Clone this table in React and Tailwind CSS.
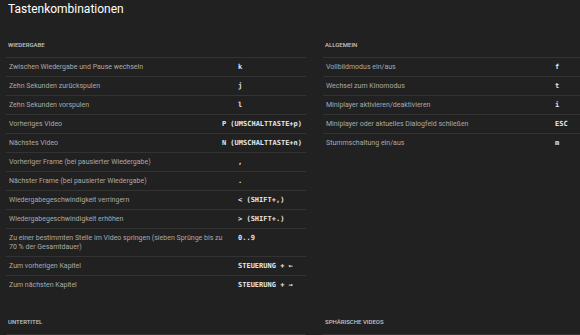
import React from "react";

const playback = [
  ["Zwischen Wiedergabe und Pause wechseln", "k"],
  ["Zehn Sekunden zurückspulen", "j"],
  ["Zehn Sekunden vorspulen", "l"],
  ["Vorheriges Video", "P (UMSCHALTTASTE+p)"],
  ["Nächstes Video", "N (UMSCHALTTASTE+n)"],
  ["Vorheriger Frame (bei pausierter Wiedergabe)", ","],
  ["Nächster Frame (bei pausierter Wiedergabe)", "."],
  ["Wiedergabegeschwindigkeit verringern", "< (SHIFT+,)"],
  ["Wiedergabegeschwindigkeit erhöhen", "> (SHIFT+.)"],
  ["Zu einer bestimmten Stelle im Video springen (sieben Sprünge bis zu 70 % der Gesamtdauer)", "0..9"],
  ["Zum vorherigen Kapitel", "STEUERUNG + ←"],
  ["Zum nächsten Kapitel", "STEUERUNG + →"],
];

const general = [
  ["Vollbildmodus ein/aus", "f"],
  ["Wechsel zum Kinomodus", "t"],
  ["Miniplayer aktivieren/deaktivieren", "i"],
  ["Miniplayer oder aktuelles Dialogfeld schließen", "ESC"],
  ["Stummschaltung ein/aus", "m"],
];

function Row({ desc, keyLabel }) {
  return (
    <div className="flex border-t border-[#333333] py-[4.5px] pl-[3px] pr-[4px]">
      <div className="flex-1 min-w-0 pr-[12px] text-[7px] leading-[9px] text-[#aaaaaa] font-['Roboto',sans-serif]">
        {desc}
      </div>
      <div className="min-w-[64px] shrink-0 whitespace-pre text-[7px] leading-[9px] font-bold text-[#e6e6e6] font-['DejaVu_Sans_Mono',monospace]">
        {keyLabel}
      </div>
    </div>
  );
}

function Section({ title, rows }) {
  return (
    <div className="flex flex-col">
      <div className="pl-[2px] text-[6px] leading-[8px] font-medium text-[#c4c4c4] font-['Roboto',sans-serif] mb-[8px]">
        {title}
      </div>
      {rows.map(([d, k]) => (
        <Row key={d} desc={d} keyLabel={k} />
      ))}
    </div>
  );
}

export default function App() {
  return (
    <div className="w-[580px] h-[335px] overflow-hidden bg-[#212121]">
      <div className="pl-[8px] pt-[1px] text-[12px] leading-[16px] text-white font-['Roboto',sans-serif]">
        Tastenkombinationen
      </div>
      <div className="mt-[24px] pl-[6px] grid grid-cols-[300px_300px] gap-x-[17px] gap-y-[24px] w-[623px]">
        <Section title="WIEDERGABE" rows={playback} />
        <Section title="ALLGEMEIN" rows={general} />
        <Section title="UNTERTITEL" rows={[["", ""]]} />
        <Section title="SPHÄRISCHE VIDEOS" rows={[["", ""]]} />
      </div>
    </div>
  );
}
